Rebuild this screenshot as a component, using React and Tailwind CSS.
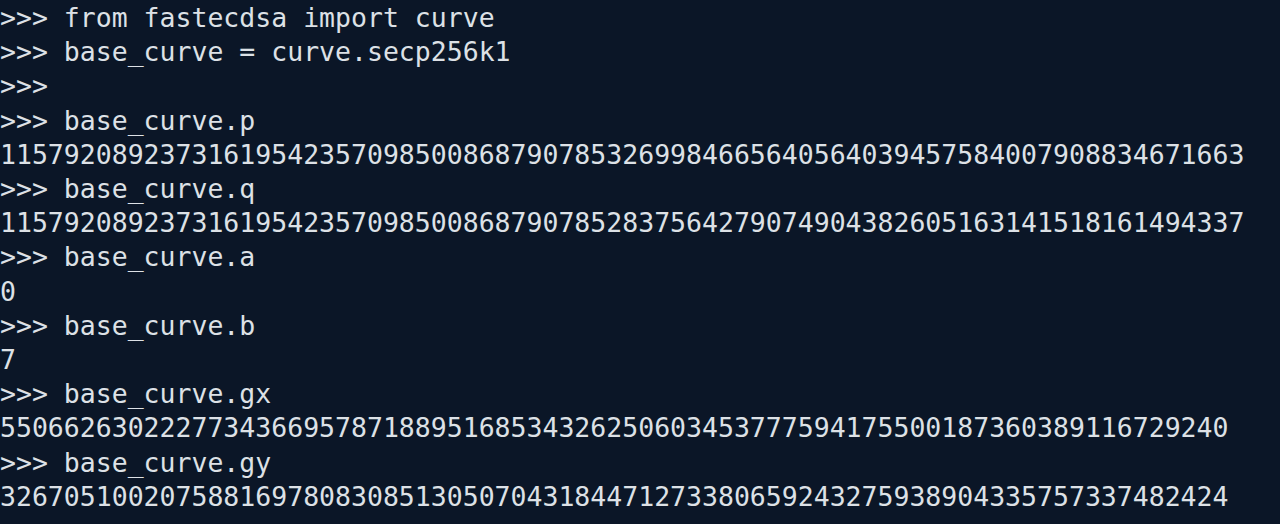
import React from 'react';

const lines = [
    '>>> from fastecdsa import curve',
    '>>> base_curve = curve.secp256k1',
    '>>>',
    '>>> base_curve.p',
    '115792089237316195423570985008687907853269984665640564039457584007908834671663',
    '>>> base_curve.q',
    '115792089237316195423570985008687907852837564279074904382605163141518161494337',
    '>>> base_curve.a',
    '0',
    '>>> base_curve.b',
    '7',
    '>>> base_curve.gx',
    '55066263022277343669578718895168534326250603453777594175500187360389116729240',
    '>>> base_curve.gy',
    '32670510020758816978083085130507043184471273380659243275938904335757337482424',
];

const App = () => {
    return (
        <div className="w-[1280px] h-[524px] overflow-hidden bg-[#0b1627] text-[#dde1e6] pt-[1px]">
            <div
                className="flex flex-col text-[26.5px] leading-[34.2px] whitespace-pre"
                style={{ fontFamily: '"DejaVu Sans Mono", "Liberation Mono", monospace' }}
            >
                {lines.map((line, i) => (
                    <div key={i}>{line || ' '}</div>
                ))}
            </div>
        </div>
    );
};

export default App;
